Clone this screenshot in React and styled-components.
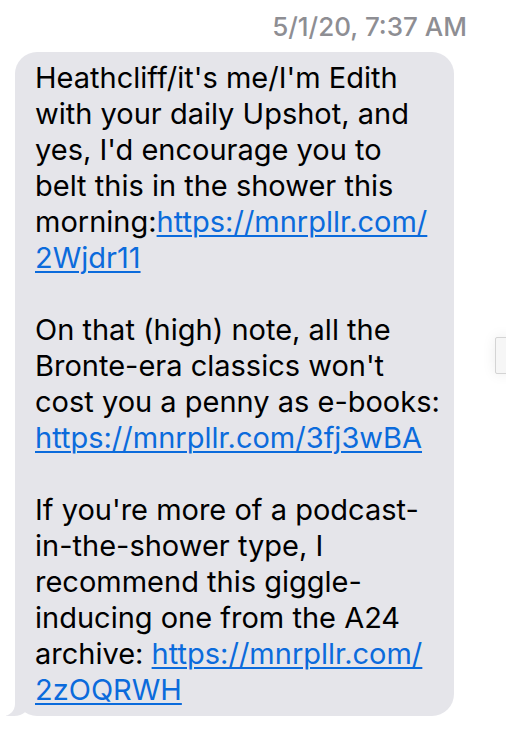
import React from 'react';
import styled, { createGlobalStyle } from 'styled-components';

const GlobalStyle = createGlobalStyle`
  html, body {
    margin: 0;
    padding: 0;
    background: #ffffff;
  }
  body {
    font-family: Inter, "Noto Sans", sans-serif;
    -webkit-font-smoothing: antialiased;
  }
`;

const Screen = styled.div`
  position: relative;
  width: 506px;
  height: 740px;
  overflow: hidden;
  background: #ffffff;
`;

const Timestamp = styled.div`
  padding: 12px 39px 0 0;
  text-align: right;
  font-size: 26px;
  font-weight: 500;
  color: #8e8e93;
  line-height: 30px;
`;

const Thread = styled.div`
  padding: 10px 0 0 15px;
`;

const Bubble = styled.div`
  position: relative;
  width: 439px;
  box-sizing: border-box;
  padding: 8px 10px 8px 20px;
  background: #e5e5ea;
  border-radius: 22px;
  color: #000;
  font-size: 29px;
  line-height: 36px;
  white-space: nowrap;

  &::before {
    content: '';
    position: absolute;
    left: -9px;
    bottom: 0;
    width: 24px;
    height: 24px;
    background: #e5e5ea;
    border-bottom-right-radius: 16px 14px;
  }
  &::after {
    content: '';
    position: absolute;
    left: -20px;
    bottom: 0;
    width: 20px;
    height: 24px;
    background: #ffffff;
    border-bottom-right-radius: 12px;
  }
`;

const Para = styled.p`
  margin: 0 0 36px;
  position: relative;
  z-index: 1;
  &:last-child {
    margin-bottom: 0;
  }
`;

const Link = styled.a`
  color: #0b6bdc;
  text-decoration: underline;
  text-decoration-thickness: 1.5px;
  text-underline-offset: 3px;
`;

const EdgeTab = styled.div`
  position: absolute;
  right: -6px;
  top: 337px;
  width: 15px;
  height: 35px;
  background: #f6f6f6;
  border: 1px solid #d4d4d4;
  border-radius: 2px;
  box-shadow: 0 0 14px rgba(0, 0, 0, 0.08);
`;

export default function App() {
  return (
    <Screen>
      <GlobalStyle />
      <Timestamp>5/1/20, 7:37 AM</Timestamp>
      <Thread>
        <Bubble>
          <Para>
            Heathcliff/it's me/I'm Edith<br />
            with your daily Upshot, and<br />
            yes, I'd encourage you to<br />
            belt this in the shower this<br />
            morning:<Link href="#">https://mnrpllr.com/<br />2Wjdr11</Link>
          </Para>
          <Para>
            On that (high) note, all the<br />
            Bronte-era classics won't<br />
            cost you a penny as e-books:<br />
            <Link href="#">https://mnrpllr.com/3fj3wBA</Link>
          </Para>
          <Para>
            If you're more of a podcast-<br />
            in-the-shower type, I<br />
            recommend this giggle-<br />
            inducing one from the A24<br />
            archive: <Link href="#">https://mnrpllr.com/<br />2zOQRWH</Link>
          </Para>
        </Bubble>
      </Thread>
      <EdgeTab />
    </Screen>
  );
}
